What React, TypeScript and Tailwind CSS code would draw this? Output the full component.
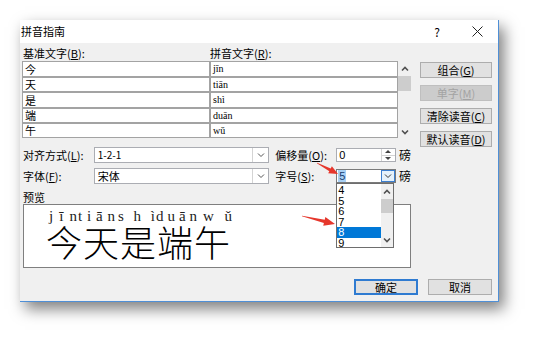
import React from "react";

const UI = "'Noto Sans CJK SC', 'Noto Sans', sans-serif";
const SERIF = "'Liberation Serif', 'DejaVu Serif', serif";

function arrowPoints(x1: number, y1: number, x2: number, y2: number, headLen: number, headW: number, shaftW: number, tailW: number) {
  const dx = x2 - x1, dy = y2 - y1;
  const L = Math.hypot(dx, dy);
  const ux = dx / L, uy = dy / L;
  const nx = -uy, ny = ux;
  const bx = x2 - ux * headLen, by = y2 - uy * headLen;
  const p = (x: number, y: number) => `${x.toFixed(2)},${y.toFixed(2)}`;
  return [
    p(x1 + nx * tailW / 2, y1 + ny * tailW / 2),
    p(bx + nx * shaftW / 2, by + ny * shaftW / 2),
    p(bx + nx * headW / 2, by + ny * headW / 2),
    p(x2, y2),
    p(bx - nx * headW / 2, by - ny * headW / 2),
    p(bx - nx * shaftW / 2, by - ny * shaftW / 2),
    p(x1 - nx * tailW / 2, y1 - ny * tailW / 2),
  ].join(" ");
}

function Chev({ up = false, bold = false, color = "#555" }: { up?: boolean; bold?: boolean; color?: string }) {
  return (
    <svg width="8" height="6" viewBox="0 0 8 6">
      <polyline
        points={up ? "1,4.5 4,1.5 7,4.5" : "1,1.5 4,4.5 7,1.5"}
        fill="none"
        stroke={color}
        strokeWidth={bold ? 1.6 : 1}
      />
    </svg>
  );
}

function Acc({ k }: { k: string }) {
  return (
    <>
      (<span className="underline underline-offset-1">{k}</span>)
    </>
  );
}

function Btn({ children, disabled = false, def = false }: { children: React.ReactNode; disabled?: boolean; def?: boolean }) {
  return (
    <div
      className={
        "h-[16px] flex items-center justify-center text-[11px] leading-none " +
        (def
          ? "border-2 border-[#2f7bd1] bg-[#e1e1e1] text-black"
          : disabled
          ? "border border-[#bfbfbf] bg-[#cccccc] text-[#a3a3a3]"
          : "border border-[#adadad] bg-[#e1e1e1] text-black")
      }
    >
      {children}
    </div>
  );
}

const rows = [
  { h: "今", p: "jīn", hh: "h-[16px]" },
  { h: "天", p: "tiān", hh: "h-[15px]" },
  { h: "是", p: "shì", hh: "h-[16px]" },
  { h: "端", p: "duān", hh: "h-[15px]" },
  { h: "午", p: "wǔ", hh: "h-[15px]" },
];

const groups = [
  { l: ["j", "ī", "n"], c: "ml-[25px] w-[28px]" },
  { l: ["t", "i", "ā", "n"], c: "ml-[1px] w-[37px]" },
  { l: ["s", "h", "ì"], c: "ml-[3px] w-[37px]" },
  { l: ["d", "u", "ā", "n"], c: "ml-[1px] w-[41px]" },
  { l: ["w", "ǔ"], c: "ml-[6px] w-[29px]" },
];

export default function App() {
  return (
    <div className="relative w-[542px] h-[346px] bg-white overflow-hidden pt-[20px] pl-[20px]" style={{ fontFamily: UI }}>
      <div className="w-[479px] h-[282px] flex flex-col bg-[#f0f0f0] border-r border-b border-[#4f8fd6] shadow-[5px_7px_14px_rgba(0,0,0,0.5)]">
        {/* title bar */}
        <div className="h-[23px] bg-white flex items-center">
          <div className="pl-[1px] text-[11px] text-black">拼音指南</div>
          <div className="flex-1" />
          <div className="w-[10px] text-center text-[12px] mr-[30px]">?</div>
          <div className="mr-[15px] flex items-center">
            <svg width="11" height="11" viewBox="0 0 11 11">
              <line x1="0.5" y1="0.5" x2="10.5" y2="10.5" stroke="#222" strokeWidth="1" />
              <line x1="10.5" y1="0.5" x2="0.5" y2="10.5" stroke="#222" strokeWidth="1" />
            </svg>
          </div>
        </div>

        {/* body */}
        <div className="flex-1 flex flex-col pl-[2px] pr-[6px] pt-[3px]">
          <div className="flex gap-[9px]">
            {/* left column */}
            <div className="w-[389px] flex flex-col">
              <div className="h-[15px] flex items-center text-[11px] leading-none">
                <div className="w-[188px] pl-[1px]">
                  基准文字<Acc k="B" />:
                </div>
                <div>
                  拼音文字<Acc k="R" />:
                </div>
              </div>
              <div className="flex">
                <div className="w-[376px] flex flex-col">
                  {rows.map((r) => (
                    <div key={r.h} className={"flex " + r.hh}>
                      <div className="w-[188px] h-full bg-white border border-[#a3a3a3] flex items-center pl-[2px] text-[11px] leading-none">
                        {r.h}
                      </div>
                      <div
                        className="w-[188px] h-full bg-white border border-[#a3a3a3] flex items-center pl-[2px] text-[10px] leading-none"
                        style={{ fontFamily: SERIF }}
                      >
                        {r.p}
                      </div>
                    </div>
                  ))}
                </div>
                <div className="w-[13px] h-[77px] flex flex-col items-center">
                  <div className="h-[15px] flex items-center justify-center">
                    <Chev up bold color="#505050" />
                  </div>
                  <div className="h-[15px] w-[13px] bg-[#cdcdcd]" />
                  <div className="flex-1" />
                  <div className="h-[12px] flex items-center justify-center">
                    <Chev bold color="#505050" />
                  </div>
                </div>
              </div>

              {/* row 1 */}
              <div className="mt-[9px] h-[16px] flex items-center text-[11px] leading-none">
                <div className="w-[72px] pl-[1px]">
                  对齐方式<Acc k="L" />:
                </div>
                <div className="w-[176px] h-[16px] bg-white border border-[#abadb3] flex">
                  <div className="flex-1 pl-[3px] flex items-center text-[10px]">1-2-1</div>
                  <div className="w-[16px] h-full border-l border-[#d4d4d4] flex items-center justify-center">
                    <Chev />
                  </div>
                </div>
                <div className="ml-[6px] w-[61px]">
                  偏移量<Acc k="O" />:
                </div>
                <div className="w-[60px] h-[14px] bg-white border border-[#abadb3] flex">
                  <div className="flex-1 pl-[2px] flex items-center text-[11px]" style={{ fontFamily: "'Liberation Sans', sans-serif" }}>0</div>
                  <div className="w-[14px] h-full border-l border-[#d4d4d4] flex flex-col">
                    <div className="flex-1 flex items-center justify-center border-b border-[#d4d4d4]">
                      <svg width="6" height="3" viewBox="0 0 6 3"><polygon points="0,3 3,0 6,3" fill="#444" /></svg>
                    </div>
                    <div className="flex-1 flex items-center justify-center">
                      <svg width="6" height="3" viewBox="0 0 6 3"><polygon points="0,0 6,0 3,3" fill="#444" /></svg>
                    </div>
                  </div>
                </div>
                <div className="ml-[3px] text-[12px]">磅</div>
              </div>

              {/* row 2 */}
              <div className="mt-[5px] h-[16px] flex items-center text-[11px] leading-none">
                <div className="w-[72px] pl-[1px]">
                  字体<Acc k="F" />:
                </div>
                <div className="w-[176px] h-[16px] bg-white border border-[#abadb3] flex">
                  <div className="flex-1 pl-[3px] flex items-center text-[11px]">宋体</div>
                  <div className="w-[16px] h-full border-l border-[#d4d4d4] flex items-center justify-center">
                    <Chev />
                  </div>
                </div>
                <div className="ml-[6px] w-[61px]">
                  字号<Acc k="S" />:
                </div>
                <div className="relative w-[60px] h-[14px] bg-white border border-[#7a7a7a] flex">
                  <div className="flex-1 pl-[1px] flex items-center text-[11px]" style={{ fontFamily: "'Liberation Sans', sans-serif" }}>
                    <span className="bg-[#a8d0f5] text-[#1b3e70] px-[1px] leading-[12px]">5</span>
                  </div>
                  <div className="w-[14px] h-full border border-[#3c7fd0] bg-[#e5f1fb] flex items-center justify-center">
                    <Chev color="#333" />
                  </div>
                  {/* dropdown list */}
                  <div
                    className="absolute left-[-1px] top-[13px] w-[58px] h-[65px] bg-white border border-[#6e6e6e] flex z-10"
                    style={{ fontFamily: "'Liberation Sans', sans-serif" }}
                  >
                    <div className="flex-1 flex flex-col pt-[1px] text-[11px]">
                      {["4", "5", "6", "7", "8", "9"].map((n) => (
                        <div
                          key={n}
                          className={
                            "h-[10.5px] leading-[10.5px] pl-[1px] " +
                            (n === "8" ? "bg-[#0078d7] text-white" : "text-black")
                          }
                        >
                          {n}
                        </div>
                      ))}
                    </div>
                    <div className="w-[12px] h-full flex flex-col items-center bg-[#f0f0f0]">
                      <div className="h-[15px] flex items-center justify-center">
                        <Chev up bold color="#505050" />
                      </div>
                      <div className="h-[14px] w-[12px] bg-[#cdcdcd]" />
                      <div className="flex-1" />
                      <div className="h-[14px] flex items-center justify-center">
                        <Chev bold color="#505050" />
                      </div>
                    </div>
                  </div>
                </div>
                <div className="ml-[3px] text-[12px]">磅</div>
              </div>

              {/* preview */}
              <div className="mt-[6px] h-[14px] flex items-center pl-[1px] text-[11px] leading-none">预览</div>
              <div className="ml-[1px] w-[388px] h-[64px] bg-white border border-[#7f7f7f] flex flex-col pt-[4px]">
                <div className="flex h-[14px]">
                  {groups.map((g, i) => (
                    <div
                      key={i}
                      className={"flex justify-between h-[14px] leading-[14px] text-[15px] text-[#222] " + g.c}
                      style={{ fontFamily: SERIF }}
                    >
                      {g.l.map((ch, j) => (
                        <span key={j}>{ch}</span>
                      ))}
                    </div>
                  ))}
                </div>
                <div className="pl-[22px] text-[36px] leading-[36px] tracking-[1px] font-light text-black">今天是端午</div>
              </div>
            </div>

            {/* right column */}
            <div className="w-[72px] flex flex-col gap-[7px] pt-[16px]">
              <Btn>
                组合<Acc k="G" />
              </Btn>
              <Btn disabled>
                单字<Acc k="M" />
              </Btn>
              <Btn>
                清除读音<Acc k="C" />
              </Btn>
              <Btn>
                默认读音<Acc k="D" />
              </Btn>
            </div>
          </div>

          {/* bottom buttons */}
          <div className="mt-[11px] flex justify-end gap-[10px]">
            <div className="w-[64px]">
              <Btn def>确定</Btn>
            </div>
            <div className="w-[64px]">
              <Btn>取消</Btn>
            </div>
          </div>
        </div>
      </div>

      <svg className="absolute left-0 top-0 pointer-events-none" width="542" height="346" viewBox="0 0 542 346">
        <polygon points={arrowPoints(317, 163, 338, 174, 9, 8, 3, 0.6)} fill="#e6372c" />
        <polygon points={arrowPoints(302, 216, 335, 224, 11, 9, 3.5, 0.6)} fill="#e6372c" />
      </svg>
    </div>
  );
}
